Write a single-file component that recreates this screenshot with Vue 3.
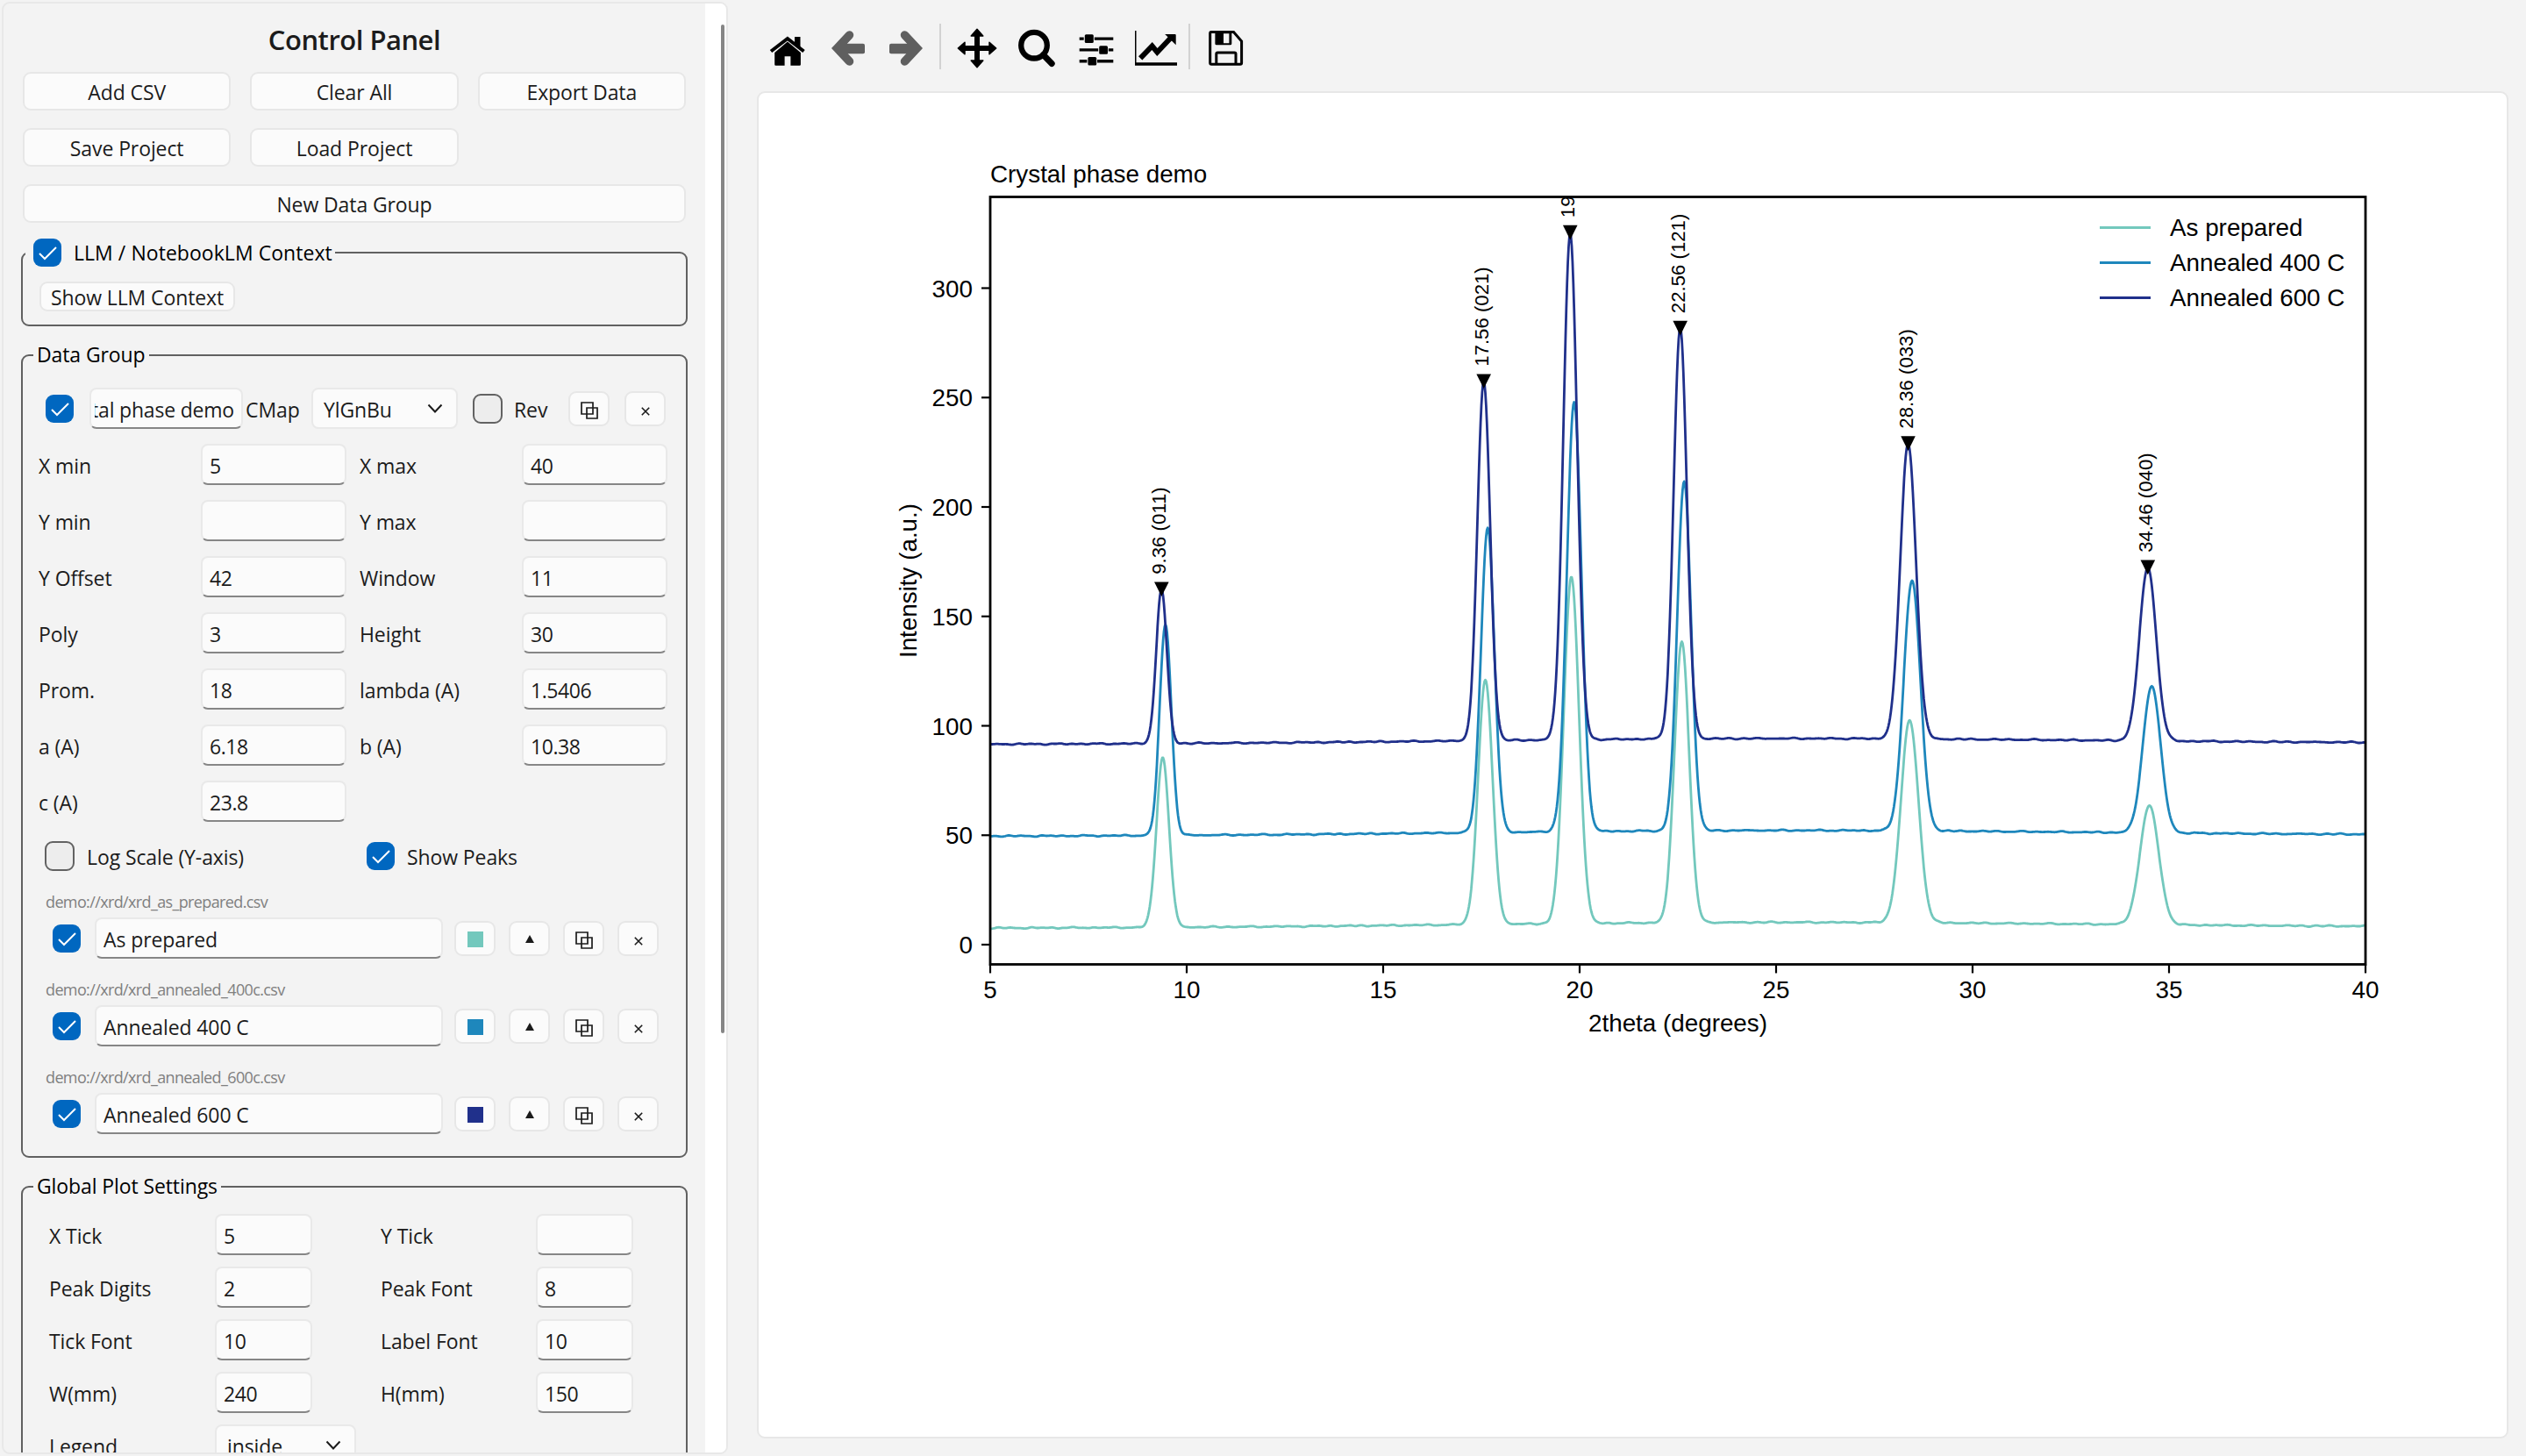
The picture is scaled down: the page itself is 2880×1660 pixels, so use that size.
<template>
  <div class="app">
    <aside class="panel">
      <div class="content">
        <h2>Control Panel</h2>
        <div class="buttons">
          <button v-for="b in projectButtons" :key="b" class="btn">{{ b }}</button>
          <button class="btn wide">New Data Group</button>
        </div>

        <fieldset class="context">
          <legend class="with-check">
            <span class="check on"><svg viewBox="0 0 32 32"><path d="M7 17l6 6L26 10" /></svg></span>
            LLM / NotebookLM Context
          </legend>
          <button class="btn small-btn">Show LLM Context</button>
        </fieldset>

        <fieldset class="group">
          <legend>Data Group</legend>
          <div class="group-head">
            <span class="check on"><svg viewBox="0 0 32 32"><path d="M7 17l6 6L26 10" /></svg></span>
            <div class="field name"><span class="clip">Crystal phase demo</span></div>
            <span class="cmap-label">CMap</span>
            <div class="select cmap">
              YlGnBu
              <svg class="chevron" viewBox="0 0 18 12"><path d="M1.5 1.5L9 9.5l7.5-8" /></svg>
            </div>
            <span class="check rev"></span>
            <span class="rev-label">Rev</span>
            <button class="tool"><svg class="copy" viewBox="0 0 20 20"><path d="M1 1h13v13H1zM7 7h12v12H7z" /></svg></button>
            <button class="tool"><svg class="cross" viewBox="0 0 10 10"><path d="M.8.8l8.400 8.400M9.200.8L.8 9.200" /></svg></button>
          </div>

          <div class="params">
            <template v-for="p in params" :key="p.label">
              <label>{{ p.label }}</label>
              <div class="field">{{ p.value }}</div>
            </template>
          </div>

          <div class="flags">
            <span class="check"></span>
            <span class="flag-label log">Log Scale (Y-axis)</span>
            <span class="check on"><svg viewBox="0 0 32 32"><path d="M7 17l6 6L26 10" /></svg></span>
            <span class="flag-label">Show Peaks</span>
          </div>

          <div v-for="s in series" :key="s.name" class="series">
            <div class="path">{{ s.path }}</div>
            <div class="series-row">
              <span class="check on"><svg viewBox="0 0 32 32"><path d="M7 17l6 6L26 10" /></svg></span>
              <div class="field series-name">{{ s.name }}</div>
              <button class="tool"><span class="swatch" :style="{ background: s.color }"></span></button>
              <button class="tool"><svg class="up" viewBox="0 0 10 9"><path d="M5 0l5 9H0z" /></svg></button>
              <button class="tool"><svg class="copy" viewBox="0 0 20 20"><path d="M1 1h13v13H1zM7 7h12v12H7z" /></svg></button>
              <button class="tool"><svg class="cross" viewBox="0 0 10 10"><path d="M.8.8l8.400 8.400M9.200.8L.8 9.200" /></svg></button>
            </div>
          </div>
        </fieldset>

        <fieldset class="global">
          <legend>Global Plot Settings</legend>
          <div class="settings">
            <template v-for="p in settings" :key="p.label">
              <label>{{ p.label }}</label>
              <div class="field">{{ p.value }}</div>
            </template>
            <label>Legend</label>
            <div class="select legend-select">
              inside
              <svg class="chevron" viewBox="0 0 18 12"><path d="M1.5 1.5L9 9.5l7.5-8" /></svg>
            </div>
          </div>
        </fieldset>
      </div>
      <div class="track"><div class="thumb"></div></div>
    </aside>

    <main>
      <div class="toolbar">
        <svg viewBox="0 0 48 48">
          <path d="M32 11h6.500v14L32 19z" />
          <path d="M5 27.500L23.900 13l18.600 14.500" class="line home-roof" />
          <path d="M23.900 16.500L38.900 29v13.500q0 1.200-1.200 1.200H27.400V33.300h-6.800v10.400H10.400q-1.200 0-1.200-1.200V29z" />
        </svg>
        <svg viewBox="0 0 48 48" class="disabled">
          <path d="M26.500 9L12.500 24l14 15" class="line arrow" />
          <path d="M12 18.800h30q2 0 2 2v7.400q0 2-2 2H12z" />
        </svg>
        <svg viewBox="0 0 48 48" class="disabled">
          <path d="M21.500 9l14 15-14 15" class="line arrow" />
          <path d="M36 18.800H6q-2 0-2 2v7.400q0 2 2 2h30z" />
        </svg>
        <i class="sep"></i>
        <svg viewBox="0 0 48 48">
          <path d="M21 8h6v13h13v6H27v13h-6V27H8v-6h13z" />
          <path d="M24 2.300l6.800 7.700H17.200zM24 45.700l-6.800-7.700h13.600zM2.300 24l7.700-6.800v13.600zM45.700 24l-7.700 6.800V17.200z" class="heads" />
        </svg>
        <svg viewBox="0 0 48 48">
          <circle cx="21" cy="20.700" r="14.800" class="line lens" />
          <path d="M31.500 31.500l9.700 10" class="line handle" />
        </svg>
        <svg viewBox="0 0 48 48">
          <path d="M4.700 11.400h5v3.300h-5zM21.800 11.400h21.500v3.300H21.800zM4.700 24.300h21.500v3.300H4.700zM37.800 24.300h5.500v3.300h-5.500zM4.700 37.100h8.700v3.300H4.700zM25 37.100h18.300v3.300H25z" />
          <rect x="10.800" y="8.300" width="10" height="9.600" rx="1.500" />
          <rect x="27.200" y="21.200" width="9.800" height="9.600" rx="1.500" />
          <rect x="14.400" y="34" width="9.800" height="9.600" rx="1.500" />
        </svg>
        <svg viewBox="0 0 48 48">
          <path d="M0 4h1.500v36.200H48v3.500H0z" />
          <path d="M6.200 35.300L19.600 21.500l5.800 7L41 12" class="line zigzag" />
          <path d="M34.200 8h11.500q1 0 1 1v11.300z" />
        </svg>
        <i class="sep"></i>
        <svg viewBox="0 0 48 48">
          <path d="M7 5.500h25.500L41.600 16v24.700q0 1.500-1.500 1.500H7.200q-1.500 0-1.500-1.500V7q0-1.500 1.300-1.500z" class="line disk" />
          <path d="M11.400 5H30.300V18.800q0 1.500-1.500 1.500H12.900q-1.500 0-1.500-1.500zM21 7.300v11h6.400v-11z" fill-rule="evenodd" />
          <path d="M12.800 42V30.500q0-1.500 1.500-1.500h19.200q1.500 0 1.500 1.500V42" class="line disk" />
        </svg>
      </div>

      <div class="canvas">
        <svg class="plot" viewBox="865 106 1992 1531">
          <defs>
            <clipPath id="axes"><rect :x="left" :y="top" :width="right - left" :height="bottom - top" /></clipPath>
          </defs>
          <text :x="left" y="208">Crystal phase demo</text>

          <g clip-path="url(#axes)">
            <path v-for="s in series" :key="s.name" :d="curve(s)" :stroke="s.color" class="curve" />
            <g v-for="p in peaks" :key="p.text">
              <path :d="marker(p)" />
              <text class="peak" :transform="`translate(${sx(p.x) + 5} ${sy(p.y) - 17}) rotate(-90)`">{{ p.text }}</text>
            </g>
          </g>

          <rect :x="left" :y="top" :width="right - left" :height="bottom - top" class="frame" />
          <g v-for="t in xTicks" :key="'x' + t">
            <path :d="`M${sx(t)} ${bottom}v10`" class="tick" />
            <text :x="sx(t)" y="1138" text-anchor="middle">{{ t }}</text>
          </g>
          <g v-for="t in yTicks" :key="'y' + t">
            <path :d="`M${left} ${sy(t)}h-10`" class="tick" />
            <text x="1109" :y="sy(t) + 10" text-anchor="end">{{ t }}</text>
          </g>
          <text :x="(left + right) / 2" y="1176" text-anchor="middle">2theta (degrees)</text>
          <text transform="translate(1045 662) rotate(-90)" text-anchor="middle">Intensity (a.u.)</text>

          <g v-for="(s, i) in series" :key="'l' + s.name">
            <path :d="`M2394 ${259.5 + i * 40}h58`" :stroke="s.color" class="key" />
            <text x="2474" :y="269 + i * 40">{{ s.name }}</text>
          </g>
        </svg>
      </div>
    </main>
  </div>
</template>

<script setup>
const projectButtons = ['Add CSV', 'Clear All', 'Export Data', 'Save Project', 'Load Project']

const params = [
  { label: 'X min', value: '5' },
  { label: 'X max', value: '40' },
  { label: 'Y min', value: '' },
  { label: 'Y max', value: '' },
  { label: 'Y Offset', value: '42' },
  { label: 'Window', value: '11' },
  { label: 'Poly', value: '3' },
  { label: 'Height', value: '30' },
  { label: 'Prom.', value: '18' },
  { label: 'lambda (A)', value: '1.5406' },
  { label: 'a (A)', value: '6.18' },
  { label: 'b (A)', value: '10.38' },
  { label: 'c (A)', value: '23.8' }
]

const settings = [
  { label: 'X Tick', value: '5' },
  { label: 'Y Tick', value: '' },
  { label: 'Peak Digits', value: '2' },
  { label: 'Peak Font', value: '8' },
  { label: 'Tick Font', value: '10' },
  { label: 'Label Font', value: '10' },
  { label: 'W(mm)', value: '240' },
  { label: 'H(mm)', value: '150' }
]

// each peak: [2theta, top of the peak on the offset axis, sigma]
const series = [
  {
    name: 'As prepared',
    path: 'demo://xrd/xrd_as_prepared.csv',
    color: '#73c8bd',
    base: 7.5,
    peaks: [[9.39, 85.5, 0.16], [17.6, 121.1, 0.183], [19.79, 168.2, 0.195], [22.6, 138.6, 0.187], [28.4, 102.4, 0.224], [34.5, 63.4, 0.24]]
  },
  {
    name: 'Annealed 400 C',
    path: 'demo://xrd/xrd_annealed_400c.csv',
    color: '#1e87bc',
    base: 49.5,
    peaks: [[9.46, 146.5, 0.148], [17.66, 190.5, 0.17], [19.86, 247.8, 0.185], [22.66, 211.5, 0.177], [28.46, 166.4, 0.213], [34.56, 118.2, 0.225]]
  },
  {
    name: 'Annealed 600 C',
    path: 'demo://xrd/xrd_annealed_600c.csv',
    color: '#20308b',
    base: 91.5,
    peaks: [[9.36, 162.4, 0.135], [17.56, 257.4, 0.161], [19.76, 325.4, 0.175], [22.56, 281.7, 0.167], [28.36, 229, 0.2], [34.46, 172.4, 0.213]]
  }
]

const peaks = [
  { x: 9.36, y: 162.4, text: '9.36 (011)' },
  { x: 17.56, y: 257.4, text: '17.56 (021)' },
  { x: 19.76, y: 325.4, text: '19.76' },
  { x: 22.56, y: 281.7, text: '22.56 (121)' },
  { x: 28.36, y: 229, text: '28.36 (033)' },
  { x: 34.46, y: 172.4, text: '34.46 (040)' }
]

const left = 1129
const right = 2697
const top = 224.5
const bottom = 1099.5
const xTicks = [5, 10, 15, 20, 25, 30, 35, 40]
const yTicks = [0, 50, 100, 150, 200, 250, 300]

const sx = v => left + (v - 5) * 44.8
const sy = v => 1077 - v * 2.495

const background = (s, x) =>
  s.base + 0.015 * (x - 5) + 2.4 * Math.exp(-((x - 25) ** 2) / 128)

const noise = (x, k) =>
  0.12 * Math.sin(x * 7.1 + k) + 0.13 * Math.sin(x * 13.7 + k * 2.3 + 2 * Math.sin(x * 1.3)) + 0.12 * Math.sin(x * 21.3 + k * 5.1 + 3 * Math.sin(x * 0.9))

const curve = s => {
  let d = ''
  for (let i = 0; i <= 1750; i++) {
    const x = 5 + i * 0.02
    let y = background(s, x) + noise(x, s.base)
    for (const [c, h, w] of s.peaks) {
      y += (h - background(s, c)) * Math.exp(-((x - c) ** 2) / (2 * w * w))
    }
    d += (i ? 'L' : 'M') + sx(x).toFixed(1) + ' ' + sy(y).toFixed(1)
  }
  return d
}

const marker = p => `M${sx(p.x) - 8.3} ${sy(p.y) - 8.3}h16.6l-8.3 16.6z`
</script>

<style>
body {
  background: #f3f3f3;
}
</style>

<style scoped>
.app {
  display: flex;
  height: 1660px;
  overflow: hidden;
  background: #f3f3f3;
  color: #1b1b1b;
  font-family: "Open Sans", "Noto Sans", sans-serif;
  font-size: 23px;
  letter-spacing: -0.1px;
  line-height: 32px;
}

.panel {
  display: flex;
  box-sizing: border-box;
  width: 828px;
  height: 1656px;
  margin: 2px 0 0 2px;
  border: 2px solid #e8e8e8;
  border-radius: 9px;
  overflow: hidden;
  flex: none;
}

.content {
  display: flex;
  flex-direction: column;
  width: 760px;
  padding: 0 20px;
  flex: none;
}

.content > * {
  flex: none;
}

.track {
  box-sizing: border-box;
  width: 24px;
  padding: 24px 2px 0 18px;
  background: #fff;
}

.thumb {
  width: 4px;
  height: 1150px;
  border-radius: 2px;
  background: #868686;
}

h2 {
  height: 75px;
  margin: 0;
  padding-top: 3px;
  line-height: 76px;
  font-size: 31px;
  font-weight: 600;
  letter-spacing: -0.5px;
  text-align: center;
}

.buttons {
  display: grid;
  grid-template-columns: repeat(3, 1fr);
  gap: 20px 22px;
  margin: 0 2px 18px;
}

.btn,
.tool {
  box-sizing: border-box;
  border: 2px solid #e7e7e7;
  border-radius: 9px;
  background: #fbfbfb;
  color: #1b1b1b;
  font: inherit;
  letter-spacing: inherit;
}

.btn {
  height: 44px;
  padding: 2px 0 0;
}

.wide {
  grid-column: 1 / -1;
}

fieldset {
  box-sizing: border-box;
  min-width: 0;
  margin: 0 0 17px;
  padding: 0;
  border: 2px solid #606060;
  border-radius: 9px;
}

legend {
  height: 32px;
  margin-left: 12px;
  padding: 0 4px;
  line-height: 30px;
  color: #000;
}

legend.with-check {
  display: flex;
  align-items: center;
  gap: 14px;
  margin-left: 3px;
  padding: 0 3px 0 9px;
  letter-spacing: 0.05px;
}

.context {
  height: 100px;
}

.small-btn {
  display: block;
  width: 223px;
  height: 34px;
  margin: 17px 0 0 19px;
  padding: 0;
}

.check {
  box-sizing: border-box;
  width: 34px;
  height: 34px;
  border: 2px solid #626262;
  border-radius: 9px;
  background: #ededed;
  flex: none;
}

.check.on {
  width: 32px;
  height: 32px;
  border: none;
  background: #0067c0;
}

.check svg {
  display: block;
  width: 32px;
  height: 32px;
  fill: none;
  stroke: #fff;
  stroke-width: 2;
}

.field,
.select {
  display: flex;
  align-items: center;
  box-sizing: border-box;
  height: 47px;
  padding: 3px 0 0 8px;
  border: 2px solid #e9e9e9;
  border-radius: 8px;
  background: #fbfbfb;
}

.field {
  border-bottom-color: #868686;
}

.select {
  justify-content: space-between;
  padding: 3px 15px 0 12px;
}

.chevron {
  width: 18px;
  height: 12px;
  margin-top: -3px;
  fill: none;
  stroke: #1b1b1b;
  stroke-width: 2;
}

.group-head {
  display: flex;
  align-items: center;
  margin: 21px 0 17px 26px;
}

.field.name {
  width: 175px;
  margin-left: 18px;
  padding: 3px 8px 0 4px;
  letter-spacing: -0.2px;
}

.clip {
  display: flex;
  justify-content: flex-end;
  width: 159px;
  overflow: hidden;
  white-space: nowrap;
}

.cmap-label {
  box-sizing: border-box;
  width: 78px;
  padding: 3px 0 0 3px;
}

.cmap {
  width: 167px;
}

.rev {
  margin-left: 17px;
}

.rev-label {
  box-sizing: border-box;
  width: 75px;
  padding: 3px 0 0 13px;
}

.tool {
  display: flex;
  align-items: center;
  justify-content: center;
  width: 47px;
  height: 40px;
  margin-right: 17px;
  padding: 0;
  flex: none;
}

.copy {
  width: 20px;
  height: 20px;
  margin-top: 4px;
  fill: none;
  stroke: #1b1b1b;
  stroke-width: 1.7;
}

.cross {
  width: 10px;
  height: 10px;
  margin-top: 7px;
  fill: none;
  stroke: #1b1b1b;
  stroke-width: 1.6;
}

.up {
  width: 10px;
  height: 9px;
  margin-top: 2px;
  fill: #1b1b1b;
}

.swatch {
  width: 18px;
  height: 18px;
  margin-top: 2px;
}

.params {
  display: grid;
  grid-template-columns: 185px 166px 200px 166px;
  grid-auto-rows: 47px;
  gap: 17px 0;
  margin-left: 18px;
}

.params .field,
.settings .field {
  letter-spacing: -0.45px;
}

.params label,
.settings label {
  padding-top: 9px;
}

.params label:nth-of-type(even) {
  padding-left: 15px;
}

.flags {
  display: flex;
  align-items: center;
  height: 34px;
  margin: 22px 0 0 25px;
}

.flag-label {
  padding: 2px 0 0 14px;
}

.flag-label.log {
  width: 319px;
  padding-left: 14px;
}

.path {
  height: 36px;
  margin-top: 17px;
  padding-left: 26px;
  line-height: 36px;
  font-size: 18px;
  letter-spacing: -0.63px;
  color: #808080;
}

.series-row {
  display: flex;
  align-items: center;
  height: 47px;
  padding-left: 34px;
}

.series-row .tool {
  margin-right: 15px;
}

.series-name {
  width: 397px;
  margin: 0 13px 0 16px;
}

.group {
  padding-bottom: 25px;
}

.settings {
  display: grid;
  grid-template-columns: 189px 189px 177px 110px;
  grid-auto-rows: 47px;
  gap: 13px 0;
  height: 400px;
  margin: 15px 0 0 30px;
}

.settings .field {
  width: 111px;
}

.legend-select {
  width: 161px;
}

main {
  width: 1997px;
  margin-left: 33px;
}

.toolbar {
  display: flex;
  box-sizing: border-box;
  gap: 20px;
  height: 104px;
  padding: 31px 0 0 11px;
}

.toolbar svg {
  width: 48px;
  height: 48px;
  fill: #000;
}

.toolbar .disabled {
  fill: #5f5f5f;
  stroke: none;
}

.toolbar .line {
  fill: none;
  stroke: #000;
}

.toolbar .disabled .line {
  stroke: #5f5f5f;
}

.sep {
  width: 2px;
  height: 52px;
  margin: -4px -3px 0 -7px;
  background: #d2d2d2;
}

.toolbar .home-roof {
  stroke-width: 4;
}

.toolbar .arrow {
  stroke-width: 9.5;
  stroke-linecap: round;
  stroke-linejoin: miter;
}

.heads {
  stroke: #000;
  stroke-width: 1.5;
  stroke-linejoin: round;
}

.toolbar .lens {
  stroke-width: 6.3;
}

.toolbar .handle {
  stroke-width: 7;
  stroke-linecap: round;
}

.toolbar .zigzag {
  stroke-width: 6;
}

.toolbar .disk {
  stroke-width: 3;
}

.canvas {
  box-sizing: border-box;
  width: 1997px;
  height: 1536px;
  border: 2px solid #e7e7e7;
  border-radius: 9px;
  background: #fff;
}

.plot {
  display: block;
  width: 1992px;
  height: 1531px;
  font-family: "Liberation Sans", Arial, sans-serif;
  font-size: 27.8px;
  letter-spacing: 0;
  fill: #000;
}

.plot .peak {
  font-size: 22.2px;
}

.curve {
  fill: none;
  stroke-width: 2.8;
  stroke-linejoin: round;
}

.frame {
  fill: none;
  stroke: #000;
  stroke-width: 2.8;
}

.tick {
  stroke: #000;
  stroke-width: 2.2;
}

.key {
  stroke-width: 2.8;
}
</style>
